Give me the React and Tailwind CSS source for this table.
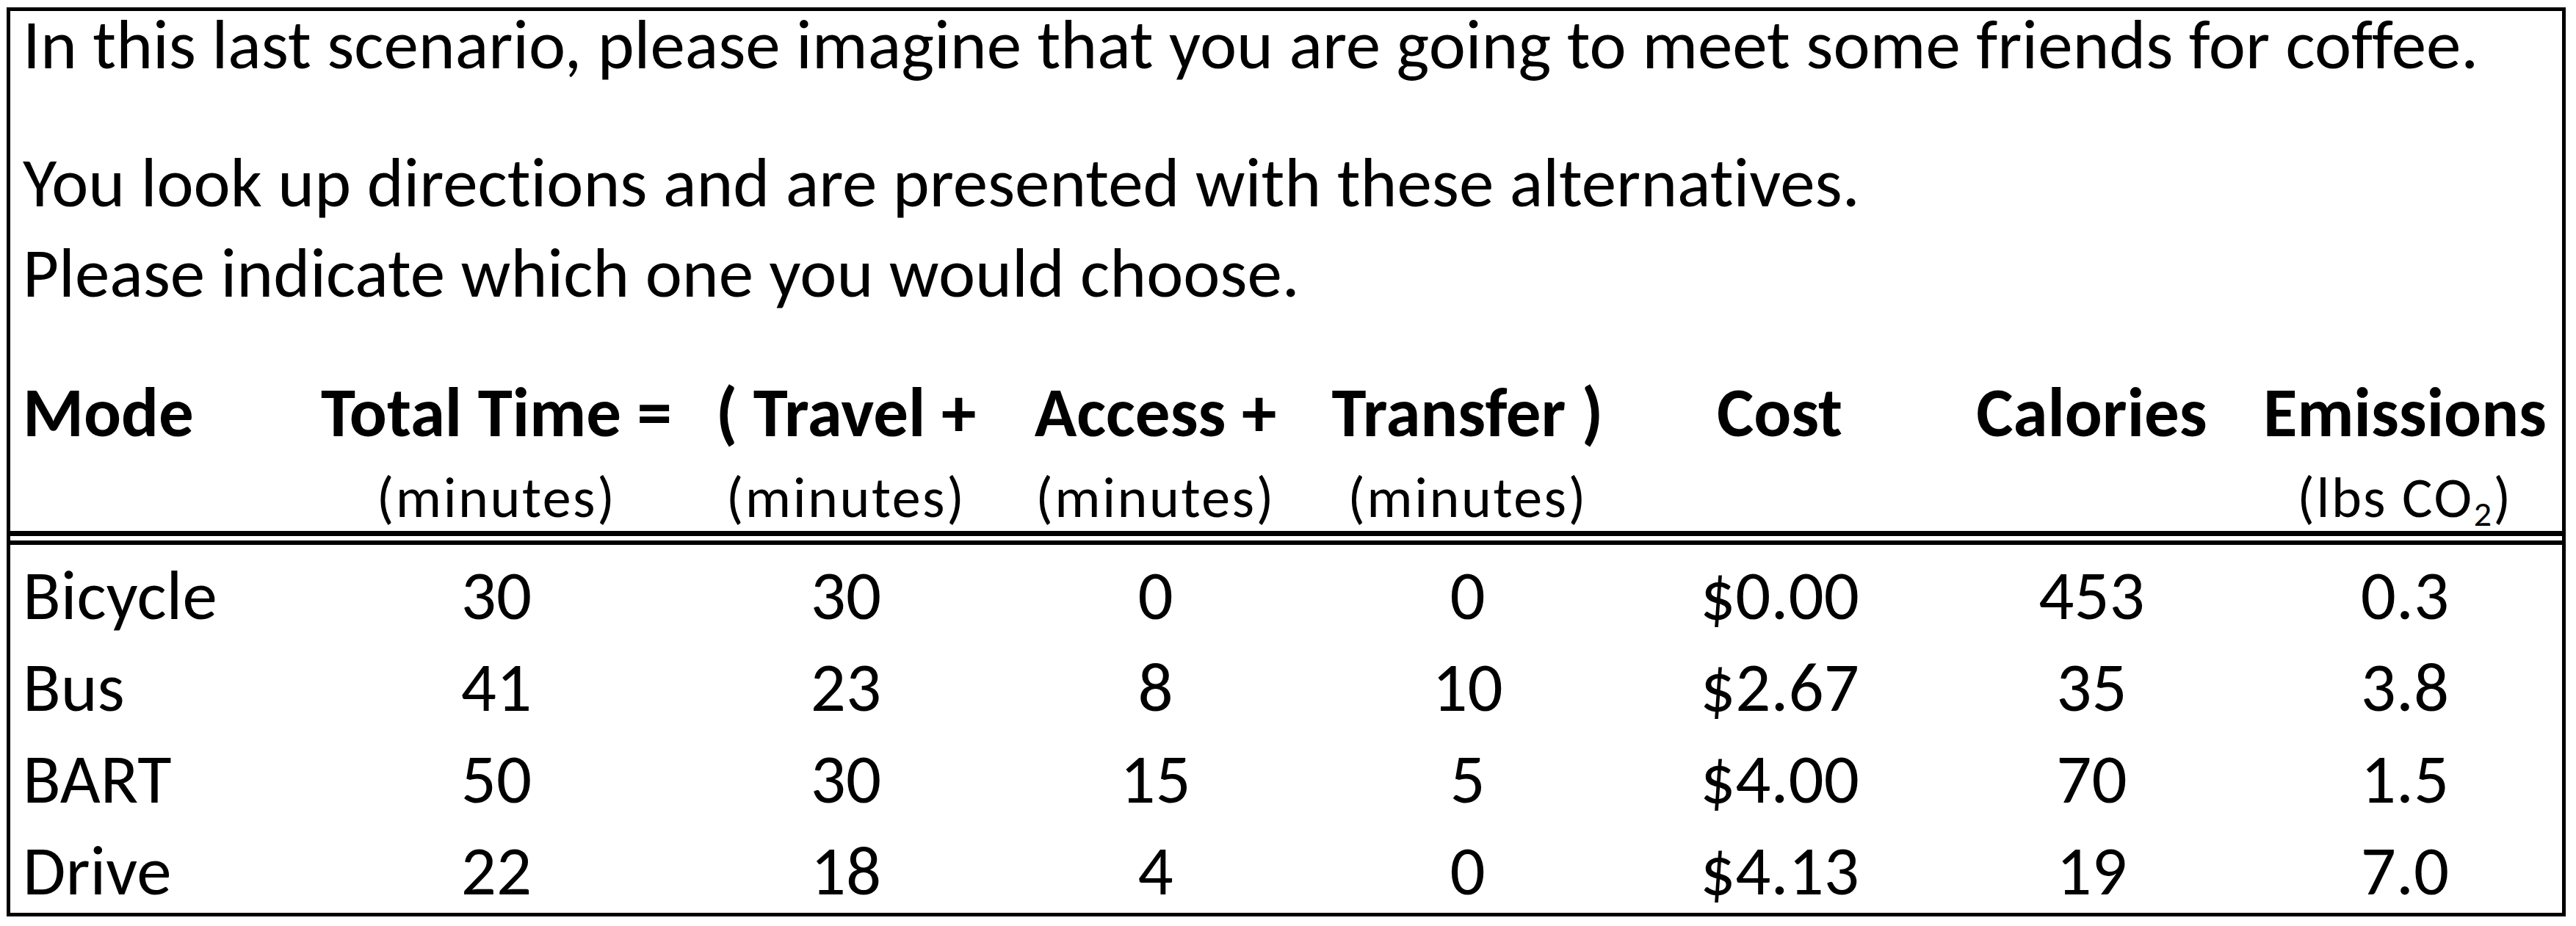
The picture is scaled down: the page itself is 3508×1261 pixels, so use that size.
import React from "react";

const COLS = "grid grid-cols-[395px_534px_418px_425px_425px_425px_425px_428px]";

const headers = [
  { title: "Mode", sub: null },
  { title: "Total Time =", sub: "(minutes)" },
  { title: "( Travel +", sub: "(minutes)" },
  { title: "Access +", sub: "(minutes)" },
  { title: "Transfer )", sub: "(minutes)" },
  { title: "Cost", sub: null },
  { title: "Calories", sub: null },
  { title: "Emissions", sub: "co2" },
];

const rows = [
  ["Bicycle", "30", "30", "0", "0", "$0.00", "453", "0.3"],
  ["Bus", "41", "23", "8", "10", "$2.67", "35", "3.8"],
  ["BART", "50", "30", "15", "5", "$4.00", "70", "1.5"],
  ["Drive", "22", "18", "4", "0", "$4.13", "19", "7.0"],
];

function Sub({ kind }) {
  if (!kind) return <div className="mt-[16px] h-[90px]" />;
  return (
    <div className="mt-[16px] h-[90px] text-[78px] leading-[90px] tracking-[2.5px] whitespace-nowrap">
      {kind === "co2" ? (
        <span>
          (lbs CO<sub className="text-[48px] leading-none">2</sub>)
        </span>
      ) : (
        kind
      )}
    </div>
  );
}

export default function App() {
  return (
    <div className="min-h-[1261px] w-[3508px] bg-white pt-[10px] pl-[9px] text-black font-['Carlito','Liberation_Sans',sans-serif] text-[95px] [font-variant-ligatures:none]">
      <div className="w-[3485px] h-[1238px] border-[5px] border-black bg-white">
        <div className="pl-[17px] whitespace-nowrap">
          <div className="leading-[92px]">
            In this last scenario, please imagine that you are going to meet some friends for coffee.
          </div>
          <div className="mt-[81px] leading-[123px]">
            You look up directions and are presented with these alternatives.
          </div>
          <div className="leading-[123px]">Please indicate which one you would choose.</div>
        </div>

        <div className={`${COLS} mt-[73px]`}>
          {headers.map((h, i) => (
            <div
              key={h.title}
              className={`flex flex-col ${i === 0 ? "items-start pl-[17px]" : "items-center"}`}
            >
              <div className="font-bold leading-[110px] whitespace-nowrap">{h.title}</div>
              <Sub kind={h.sub} />
            </div>
          ))}
        </div>

        <div className="h-[19px] border-t-[7px] border-b-[6px] border-black" />

        <div className="pt-[7px]">
          {rows.map((r, ri) => (
            <div
              key={r[0]}
              className={`${COLS} leading-[125px] ${ri === rows.length - 1 ? "h-[118px]" : "h-[125px]"}`}
            >
              {r.map((v, ci) => (
                <div
                  key={ci}
                  className={`whitespace-nowrap ${ci === 0 ? "pl-[17px] text-left" : "text-center"}`}
                >
                  {v}
                </div>
              ))}
            </div>
          ))}
        </div>
      </div>
    </div>
  );
}
